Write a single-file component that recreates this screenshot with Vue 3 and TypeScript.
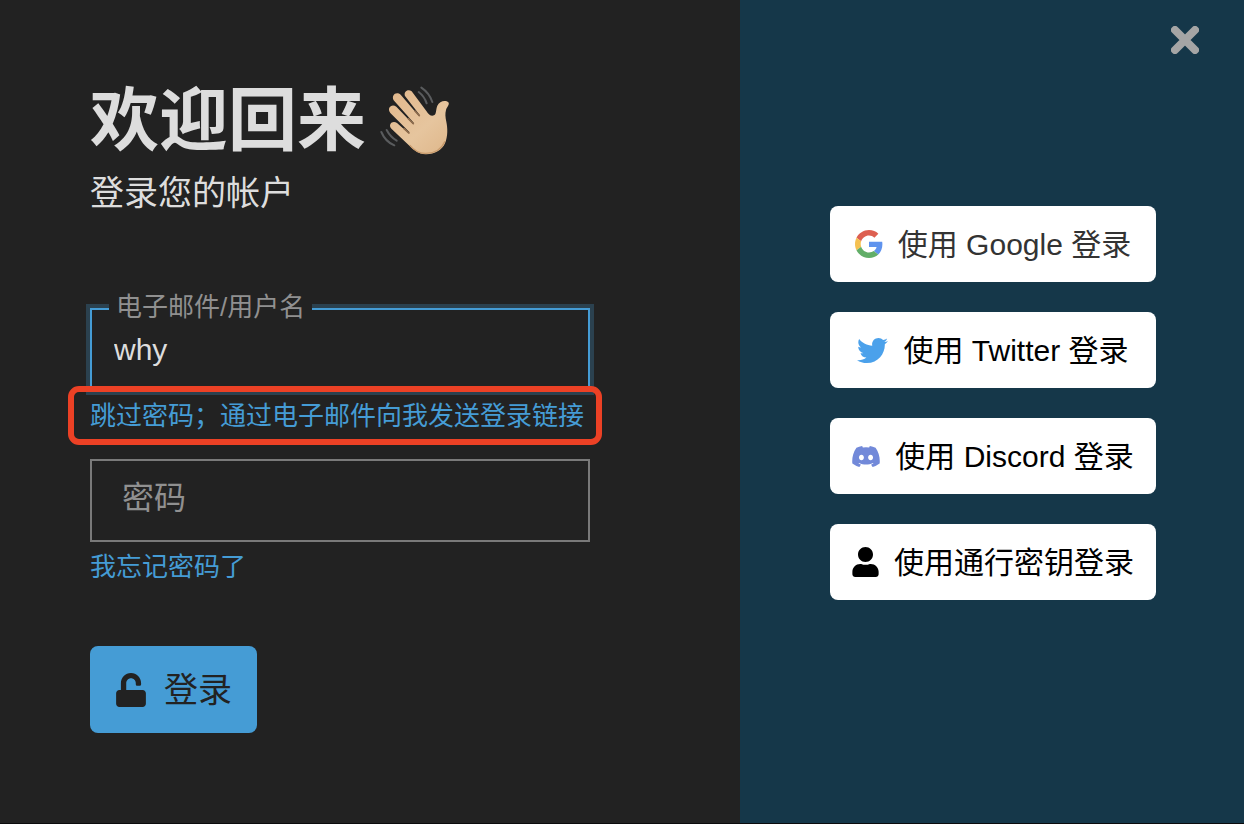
<script setup lang="ts">
import { ref } from 'vue'

const login = ref('why')
const password = ref('')

interface Provider {
  id: string
  label: string
}

const providers: Provider[] = [
  { id: 'google', label: '使用 Google 登录' },
  { id: 'twitter', label: '使用 Twitter 登录' },
  { id: 'discord', label: '使用 Discord 登录' },
  { id: 'passkey', label: '使用通行密钥登录' },
]
</script>

<template>
  <main class="login-page">
    <section class="credentials">
      <h1 class="title">
        <span>欢迎回来</span>
        <svg class="wave" viewBox="27 27 216 216" role="img" aria-label="挥手">
          <defs>
            <linearGradient id="skin" x1="60" y1="50" x2="225" y2="235" gradientUnits="userSpaceOnUse">
              <stop offset="0" stop-color="#e2b88c" />
              <stop offset="0.6" stop-color="#e6c59e" />
              <stop offset="1" stop-color="#dfb88c" />
            </linearGradient>
          </defs>
          <g fill="none" stroke="#5a5c5e" stroke-width="6" stroke-linecap="round">
            <path d="M154 38Q178 54 187 81" />
            <path d="M146 51Q163 64 170 85" />
            <path d="M34 171Q46 200 73 211" />
            <path d="M50 165Q61 186 80 197" />
          </g>
          <path
            fill="url(#skin)"
            d="M105 63C100 50 114 40 125 49L169 108C176 119 184 125 192 121C200 117 197 104 202 92C208 77 228 74 235 82C240 89 231 95 228 105C225 116 226 126 229 140C233 159 234 183 225 205C216 226 192 239 166 238C147 237 133 227 119 213L65 162C52 148 68 135 81 144L115 174L118 171L61 114C50 100 64 85 79 95L128 146L131 143L71 76C63 61 78 48 92 59L146 122L149 120Z"
          />
          <g fill="none" stroke="#8f6d4d" stroke-width="5" stroke-linecap="round">
            <path d="M135 108L148 122" />
            <path d="M115 131L130 146" />
            <path d="M102 161L117 174" />
          </g>
          <path fill="none" stroke="#c99b6c" stroke-width="4" stroke-linecap="round" d="M120 211C134 228 151 236 168 235C192 235 214 223 224 200" />
        </svg>
      </h1>
      <p class="subtitle">登录您的帐户</p>

      <form class="form" @submit.prevent>
        <div class="field focused">
          <label class="floating" for="login-name">电子邮件/用户名</label>
          <input id="login-name" v-model="login" type="text" autocomplete="off" />
        </div>
        <div class="hint highlighted">
          <a href="#email-login">跳过密码；通过电子邮件向我发送登录链接</a>
        </div>

        <div class="field password">
          <label class="inside" for="login-password">密码</label>
          <input id="login-password" v-model="password" type="password" autocomplete="off" />
        </div>
        <div class="hint">
          <a href="#forgot">我忘记密码了</a>
        </div>

        <button class="submit" type="submit">
          <svg width="30" height="34" viewBox="0 0 448 512" aria-hidden="true">
            <path
              fill="currentColor"
              d="M400 256H152V152.9c0-39.6 31.7-72.5 71.3-72.9 40-.4 72.7 32.1 72.7 72v16c0 13.3 10.7 24 24 24h32c13.3 0 24-10.7 24-24v-16C376 68 307.5-.3 223.5 0 139.5.3 72 69.5 72 153.5V256H48c-26.5 0-48 21.5-48 48v160c0 26.5 21.5 48 48 48h352c26.5 0 48-21.5 48-48V304c0-26.5-21.5-48-48-48z"
            />
          </svg>
          <span>登录</span>
        </button>
      </form>
    </section>

    <aside class="providers">
      <button class="close" type="button" aria-label="关闭">
        <svg width="28" height="28" viewBox="0 0 28 28" aria-hidden="true">
          <path d="M4 4L24 24M24 4L4 24" fill="none" stroke="currentColor" stroke-width="8" stroke-linecap="round" />
        </svg>
      </button>

      <button v-for="p in providers" :key="p.id" type="button" class="provider" :class="p.id">
        <svg v-if="p.id === 'google'" width="28" height="28" viewBox="0 0 48 48" aria-hidden="true">
          <path fill="#dd5f50" d="M24 9.5c3.54 0 6.71 1.22 9.21 3.6l6.85-6.85C35.9 2.38 30.47 0 24 0 14.62 0 6.51 5.38 2.56 13.22l7.98 6.19C12.43 13.72 17.74 9.5 24 9.5z" />
          <path fill="#5f93ee" d="M46.98 24.55c0-1.57-.15-3.09-.38-4.55H24v9.02h12.94c-.58 2.96-2.26 5.48-4.78 7.18l7.73 6c4.51-4.18 7.09-10.36 7.09-17.65z" />
          <path fill="#f5c151" d="M10.53 28.59c-.48-1.45-.76-2.99-.76-4.59s.27-3.14.76-4.59l-7.98-6.19C.92 16.46 0 20.12 0 24c0 3.88.92 7.54 2.56 10.78l7.97-6.19z" />
          <path fill="#62ae68" d="M24 48c6.48 0 11.93-2.13 15.89-5.81l-7.73-6c-2.15 1.45-4.92 2.3-8.16 2.3-6.26 0-11.57-4.22-13.47-9.91l-7.98 6.19C6.51 42.62 14.62 48 24 48z" />
        </svg>
        <svg v-else-if="p.id === 'twitter'" width="31" height="31" viewBox="0 0 512 512" aria-hidden="true">
          <path
            fill="#4ba1eb"
            d="M459.37 151.716c.325 4.548.325 9.097.325 13.645 0 138.72-105.583 298.558-298.558 298.558-59.452 0-114.68-17.219-161.137-47.106 8.447.974 16.568 1.299 25.34 1.299 49.055 0 94.213-16.568 130.274-44.832-46.132-.975-84.792-31.188-98.112-72.772 6.498.974 12.995 1.624 19.818 1.624 9.421 0 18.843-1.3 27.614-3.573-48.081-9.747-84.143-51.98-84.143-102.985v-1.299c13.969 7.797 30.214 12.67 47.431 13.319-28.264-18.843-46.781-51.005-46.781-87.391 0-19.492 5.197-37.36 14.294-52.954 51.655 63.675 129.3 105.258 216.365 109.807-1.624-7.797-2.599-15.918-2.599-24.04 0-57.828 46.782-104.934 104.934-104.934 30.213 0 57.502 12.67 76.67 33.137 23.715-4.548 46.456-13.32 66.599-25.34-7.798 24.366-24.366 44.833-46.132 57.827 21.117-2.273 41.584-8.122 60.426-16.243-14.292 20.791-32.161 39.308-52.628 54.253z"
          />
        </svg>
        <svg v-else-if="p.id === 'discord'" width="28" height="21" viewBox="26 32 588 448" aria-hidden="true">
          <path
            fill="#7289d9"
            d="M524.531,69.836a1.5,1.5,0,0,0-.764-.7A485.065,485.065,0,0,0,404.081,32.03a1.816,1.816,0,0,0-1.923.91,337.461,337.461,0,0,0-14.9,30.6,447.848,447.848,0,0,0-134.426,0,309.541,309.541,0,0,0-15.135-30.6,1.89,1.89,0,0,0-1.924-.91A483.689,483.689,0,0,0,116.085,69.137a1.712,1.712,0,0,0-.788.676C39.068,183.651,18.186,294.69,28.43,404.354a2.016,2.016,0,0,0,.765,1.375A487.666,487.666,0,0,0,176.02,479.918a1.9,1.9,0,0,0,2.063-.676A348.2,348.2,0,0,0,208.12,430.4a1.86,1.86,0,0,0-1.019-2.588,321.173,321.173,0,0,1-45.868-21.853,1.885,1.885,0,0,1-.185-3.126c3.082-2.309,6.166-4.711,9.109-7.137a1.819,1.819,0,0,1,1.9-.256c96.229,43.917,200.41,43.917,295.5,0a1.812,1.812,0,0,1,1.924.233c2.944,2.426,6.027,4.851,9.132,7.16a1.884,1.884,0,0,1-.162,3.126,301.407,301.407,0,0,1-45.89,21.83,1.875,1.875,0,0,0-1,2.611,391.055,391.055,0,0,0,30.014,48.815,1.864,1.864,0,0,0,2.063.7A486.048,486.048,0,0,0,610.7,405.729a1.882,1.882,0,0,0,.765-1.352C623.729,277.594,590.933,167.465,524.531,69.836ZM222.491,337.58c-28.972,0-52.844-26.587-52.844-59.239S193.056,219.1,222.491,219.1c29.665,0,53.306,26.82,52.843,59.239C275.334,310.993,251.924,337.58,222.491,337.58Zm195.38,0c-28.971,0-52.843-26.587-52.843-59.239S388.437,219.1,417.871,219.1c29.667,0,53.307,26.82,52.844,59.239C470.715,310.993,447.538,337.58,417.871,337.58Z"
          />
        </svg>
        <svg v-else width="27" height="30" viewBox="0 0 448 512" aria-hidden="true">
          <path
            fill="currentColor"
            d="M224 256c70.7 0 128-57.3 128-128S294.7 0 224 0 96 57.3 96 128s57.3 128 128 128zm89.6 32h-16.7c-22.2 10.2-46.9 16-72.9 16s-50.6-5.8-72.9-16h-16.7C60.2 288 0 348.2 0 422.4V464c0 26.5 21.5 48 48 48h352c26.5 0 48-21.5 48-48v-41.6c0-74.2-60.2-134.4-134.4-134.4z"
          />
        </svg>
        <span>{{ p.label }}</span>
      </button>
    </aside>
  </main>
</template>

<style>
body {
  background: #222;
}
</style>

<style scoped>
.login-page,
.login-page * {
  box-sizing: border-box;
}

.login-page {
  display: flex;
  min-height: 100vh;
  border-bottom: 1px solid #0b0b0c;
  background: #222;
  color: #ddd;
  font-family: "Liberation Sans", "Noto Sans CJK SC", sans-serif;
}

button,
input {
  margin: 0;
  font-family: inherit;
}

svg {
  display: block;
  flex: none;
}

.credentials {
  flex: 1;
  padding: 80px 150px 90px 90px;
}

.title {
  display: flex;
  align-items: flex-start;
  gap: 13px;
  margin: 0;
  font-size: 69px;
  font-weight: 700;
  line-height: 84px;
}

.wave {
  width: 72px;
  height: 72px;
  margin-top: 4px;
}

.subtitle {
  margin: 8px 0 0;
  font-size: 34px;
  line-height: 42px;
}

.form {
  margin-top: 94px;
}

.field {
  position: relative;
}

.field input {
  display: block;
  width: 100%;
  height: 83px;
  padding: 0 22px;
  border: 2px solid #7a7a7a;
  border-radius: 0;
  outline: none;
  background: #222;
  color: #ddd;
  font-size: 30px;
}

.focused input {
  border-color: #459cd5;
  box-shadow: 0 0 0 4px #2b414f;
}

.floating {
  position: absolute;
  top: -20px;
  left: 19px;
  padding: 0 7px;
  background: #222;
  color: #909090;
  font-size: 26px;
  line-height: 38px;
}

.inside {
  position: absolute;
  top: 18px;
  left: 32px;
  color: #909090;
  font-size: 32px;
  line-height: 42px;
}

.hint {
  position: relative;
  margin-top: 8px;
  font-size: 26px;
  line-height: 34px;
  white-space: nowrap;
}

.hint a {
  color: #459cd5;
  text-decoration: none;
}

.highlighted::after {
  content: "";
  position: absolute;
  inset: -13px -12px -12px -22px;
  border: 6px solid #ec4125;
  border-radius: 11px;
  pointer-events: none;
}

.password {
  margin-top: 26px;
}

.submit {
  display: flex;
  align-items: center;
  gap: 18px;
  height: 87px;
  margin-top: 62px;
  padding: 0 25px 0 26px;
  border: 0;
  border-radius: 8px;
  background: #459cd5;
  color: #222;
  font-size: 34px;
  line-height: 42px;
}

.providers {
  position: relative;
  display: flex;
  flex: 0 0 504px;
  flex-direction: column;
  gap: 30px;
  padding: 206px 88px 90px 90px;
  background: #153749;
}

.close {
  position: absolute;
  top: 26px;
  right: 45px;
  padding: 0;
  border: 0;
  background: none;
  color: #a5a5a5;
}

.provider {
  display: flex;
  align-items: center;
  justify-content: center;
  gap: 15px;
  height: 76px;
  padding: 0;
  border: 0;
  border-radius: 8px;
  background: #fff;
  color: #000;
  font-size: 30px;
  line-height: 40px;
  white-space: nowrap;
}

.provider span {
  padding-top: 2px;
}

.google {
  color: #333;
}
</style>
